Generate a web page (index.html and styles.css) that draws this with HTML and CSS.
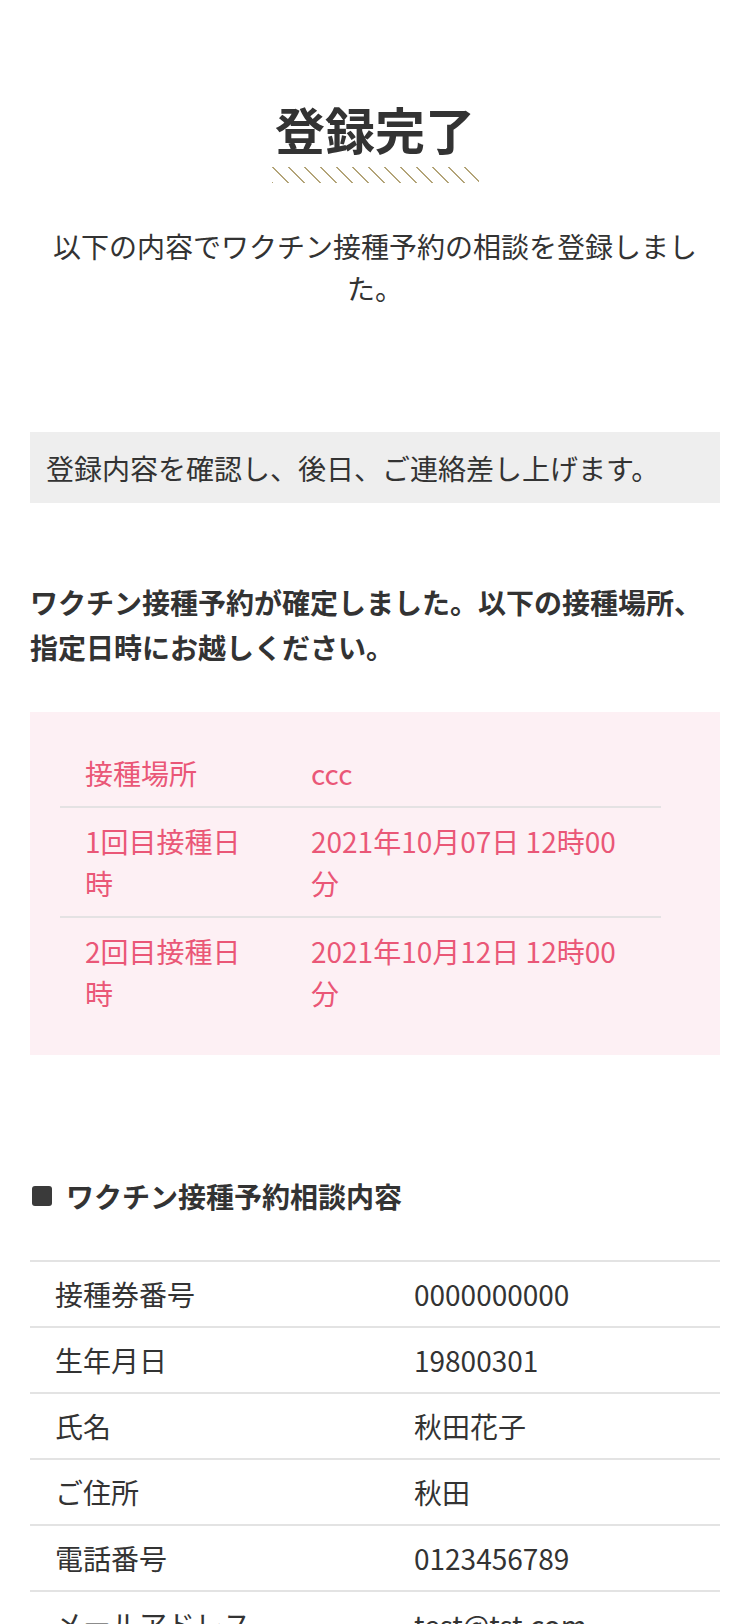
FILE: index.html
```html
<!DOCTYPE html>
<html lang="ja">
<head>
    <meta charset="utf-8">
    <meta name="viewport" content="width=device-width, initial-scale=1">
    <title>登録完了</title>
    <link rel="stylesheet" href="styles.css">
</head>
<body>
    <div class="page">
        <div class="page-head">
            <h1 class="page-title">登録完了</h1>
            <div class="page-title-hatch"></div>
        </div>
        <p class="lead">以下の内容でワクチン接種予約の相談を登録しました。</p>

        <div class="notice">登録内容を確認し、後日、ご連絡差し上げます。</div>

        <p class="confirm-text">ワクチン接種予約が確定しました。以下の接種場所、指定日時にお越しください。</p>

        <div class="reserve-box">
            <table class="reserve-table">
                <tr>
                    <th>接種場所</th>
                    <td>ccc</td>
                </tr>
                <tr>
                    <th>1回目接種日時</th>
                    <td>2021年10月07日 12時00分</td>
                </tr>
                <tr>
                    <th>2回目接種日時</th>
                    <td>2021年10月12日 12時00分</td>
                </tr>
            </table>
        </div>

        <h2 class="section-title"><span class="section-mark"></span>ワクチン接種予約相談内容</h2>

        <table class="detail-table">
            <tr>
                <th>接種券番号</th>
                <td>0000000000</td>
            </tr>
            <tr>
                <th>生年月日</th>
                <td>19800301</td>
            </tr>
            <tr>
                <th>氏名</th>
                <td>秋田花子</td>
            </tr>
            <tr>
                <th>ご住所</th>
                <td>秋田</td>
            </tr>
            <tr>
                <th>電話番号</th>
                <td>0123456789</td>
            </tr>
            <tr>
                <th>メールアドレス</th>
                <td>test@tst.com</td>
            </tr>
        </table>
    </div>
</body>
</html>
```

FILE: styles.css
```css
body {
    margin: 0;
    background: #fff;
    color: #333;
    font-family: "Noto Sans CJK JP", "Noto Sans", sans-serif;
    font-size: 28px;
    line-height: 42px;
}

.page {
    padding: 0 30px 60px 30px;
}

.page-head {
    display: flex;
    flex-direction: column;
    align-items: center;
    padding-top: 93px;
}

.page-title {
    margin: 0;
    font-size: 50px;
    line-height: 70px;
    font-weight: bold;
    color: #333;
}

.page-title-hatch {
    width: 207px;
    height: 16px;
    margin-top: 4px;
    background: repeating-linear-gradient(45deg, #b3a478 0, #b3a478 1.3px, transparent 1.3px, transparent 11.3px);
}

.lead {
    margin: 42px 0 0 0;
    padding: 0 12px;
    text-align: center;
}

.notice {
    margin-top: 123px;
    padding: 15px 16px 14px 16px;
    background: #eee;
}

.confirm-text {
    margin: 77px 0 0 0;
    font-weight: bold;
    line-height: 45px;
}

.reserve-box {
    margin-top: 42px;
    padding: 28px 30px 29px 30px;
    background: #fdf0f4;
}

.reserve-table {
    width: 601px;
    border-collapse: collapse;
    color: #ea5777;
}

    .reserve-table th,
    .reserve-table td {
        padding: 12px 25px;
        text-align: left;
        font-weight: normal;
        vertical-align: top;
    }

    .reserve-table th {
        width: 176px;
    }

    .reserve-table tr + tr {
        border-top: 2px solid #e4e2e3;
    }

.section-title {
    display: flex;
    align-items: center;
    margin: 120px 0 0 0;
    font-size: 28px;
    line-height: 42px;
    font-weight: bold;
}

.section-mark {
    width: 20px;
    height: 20px;
    margin: 0 14px 0 2px;
    background: #3a3a3a;
    border-radius: 3px;
}

.detail-table {
    width: 100%;
    margin-top: 43px;
    border-collapse: collapse;
}

    .detail-table tr {
        border-top: 2px solid #e3e3e3;
    }

    .detail-table th,
    .detail-table td {
        padding: 11px 25px;
        text-align: left;
        font-weight: normal;
        vertical-align: top;
    }

    .detail-table th {
        width: 309px;
    }
```
